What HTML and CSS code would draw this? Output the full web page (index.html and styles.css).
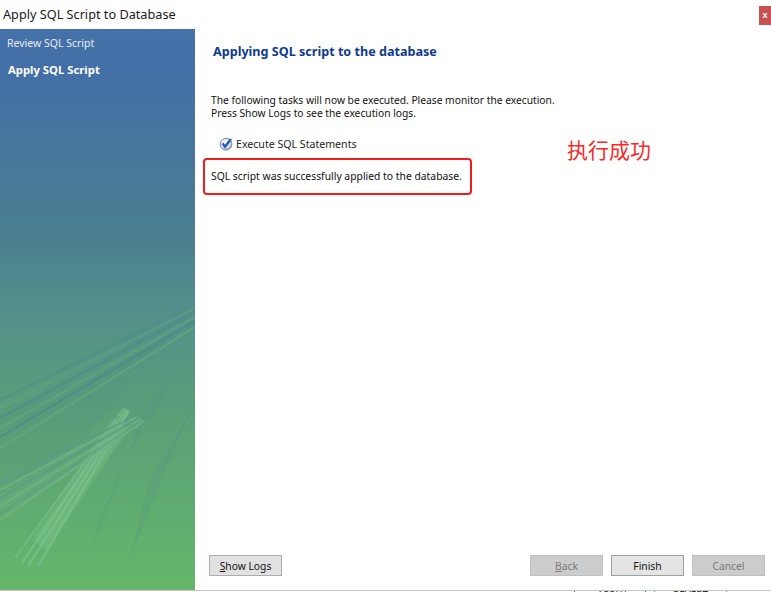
FILE: index.html
```html
<!DOCTYPE html>
<html lang="en">
<head>
<meta charset="utf-8">
<title>Apply SQL Script to Database</title>
<link rel="stylesheet" href="styles.css">
</head>
<body>
<div class="window">
  <header class="titlebar">
    <span class="title">Apply SQL Script to Database</span>
    <span class="close">x</span>
  </header>
  <div class="main">
    <aside class="sidebar">
      <svg class="art" viewBox="0 0 195 300" aria-hidden="true">
        <defs>
          <filter id="soft" x="-20%" y="-20%" width="140%" height="140%"><feGaussianBlur stdDeviation="1.6"/></filter>
          <filter id="tiny" x="-20%" y="-20%" width="140%" height="140%"><feGaussianBlur stdDeviation=".45"/></filter>
        </defs>
        <polygon points="195,40 157,63 83,150 55,175 0,205 0,120" fill="#4e8c83" opacity=".16"/>
        <polygon points="187,67 143,123 100,240 85,270 120,180" fill="#4e8c83" opacity=".13"/>
        <polygon points="195,113 165,180 127,277 150,190" fill="#4e8c83" opacity=".18"/>
        <g fill="none" stroke-width="2.6" filter="url(#tiny)">
          <path d="M195 15 L0 110" stroke="#4b8a8c" opacity=".4"/>
          <path d="M195 18 L0 118" stroke="#5ea57f" opacity=".4"/>
          <path d="M195 22 L0 128" stroke="#4a8a8c" opacity=".55"/>
          <path d="M195 27 L0 138" stroke="#62a87c" opacity=".5"/>
          <path d="M195 31 L0 147" stroke="#4a8a8c" opacity=".65"/>
          <path d="M195 37 L0 158" stroke="#62a87c" opacity=".65"/>
        </g>
        <path d="M120 134 L40 255" stroke="#7fc78e" stroke-width="18" opacity=".4" fill="none" filter="url(#soft)"/>
        <g fill="none" stroke-width="2" filter="url(#tiny)">
          <path d="M124 118 L15 268" stroke="#78bf8b" opacity=".65"/>
          <path d="M126 119 L22 273" stroke="#7cc48e" opacity=".7"/>
          <path d="M128 120 L28 276" stroke="#7cc48e" opacity=".7"/>
          <path d="M129 121 L38 276" stroke="#7cc48e" opacity=".7"/>
        </g>
        <path d="M118 142 L0 215" stroke="#6bb083" stroke-width="22" opacity=".28" fill="none" filter="url(#soft)"/>
        <g fill="none" stroke-width="2.2" filter="url(#tiny)">
          <path d="M135 126 L0 193" stroke="#5a9c86" opacity=".75"/>
          <path d="M137 127 L0 200" stroke="#6fb485" opacity=".7"/>
          <path d="M139 128 L0 208" stroke="#5a9c86" opacity=".75"/>
          <path d="M141 129 L0 216" stroke="#6fb485" opacity=".7"/>
          <path d="M143 130 L0 224" stroke="#5f9f84" opacity=".6"/>
          <path d="M144 131 L0 230" stroke="#6fb485" opacity=".7"/>
        </g>
      </svg>
      <nav class="steps">
        <div class="step">Review SQL Script</div>
        <div class="step current">Apply SQL Script</div>
      </nav>
    </aside>
    <section class="content">
      <h1 class="heading">Applying SQL script to the database</h1>
      <p class="intro">The following tasks will now be executed. Please monitor the execution.<br>Press Show Logs to see the execution logs.</p>
      <div class="task">
        <svg class="check" viewBox="0 0 14 14" aria-hidden="true">
          <defs>
            <radialGradient id="ball" cx=".4" cy=".35" r=".7">
              <stop offset="0" stop-color="#ffffff"/>
              <stop offset=".7" stop-color="#d4dbe6"/>
              <stop offset="1" stop-color="#7d8590"/>
            </radialGradient>
          </defs>
          <circle cx="7" cy="7.2" r="5.9" fill="url(#ball)" stroke="#7f868f" stroke-width="1"/>
          <path d="M3.6 6.4 L6 9.8 L12 2" fill="none" stroke="#1f5cc0" stroke-width="2.4"/>
        </svg>
        <span>Execute SQL Statements</span>
      </div>
      <div class="result-row">
        <p class="result">SQL script was successfully applied to the database.</p>
        <span class="note">执行成功</span>
      </div>
      <div class="spacer"></div>
      <footer class="actions">
        <button class="btn"><u>S</u>how Logs</button>
        <div class="nav-buttons">
          <button class="btn disabled"><u>B</u>ack</button>
          <button class="btn finish">Finish</button>
          <button class="btn disabled">Cancel</button>
        </div>
      </footer>
    </section>
  </div>
  <div class="under">
    <i class="tick blue t1"></i>
    <span class="under-a">APPLY</span>
    <i class="tick blue t2"></i>
    <i class="tick t3"></i>
    <span class="under-b">REVERT</span>
    <i class="tick t4"></i>
  </div>
</div>
</body>
</html>
```
FILE: styles.css
```css
* { box-sizing: border-box; }
html, body { margin: 0; height: 100%; overflow: hidden; background: #fff; }
body { font-family: "Noto Sans", "Open Sans", "Liberation Sans", sans-serif; color: #111; }
.window { width: 771px; height: 592px; display: flex; flex-direction: column; }

.titlebar { height: 29px; flex: none; display: flex; justify-content: space-between; padding: 6px 0 0 3px; }
.title { font-size: 12.7px; line-height: 16px; color: #1a1a1a; }
.close { width: 12px; height: 19px; background: #c75050; color: #fff; font: bold 9px/19px "Liberation Sans", sans-serif; text-align: center; }

.main { height: 561px; flex: none; display: flex; }
.sidebar {
  width: 195px; flex: none; position: relative;
  background: linear-gradient(180deg, #4471a8 0%, #436fa6 8%, #4b8090 38%, #53908a 50%, #5aa078 70%, #66b66a 100%);
}
.art { position: absolute; left: 0; top: 261px; width: 195px; height: 300px; }
.steps { position: relative; padding: 6px 0 0 7px; display: flex; flex-direction: column; gap: 9px; }
.step { font-size: 10.5px; line-height: 17px; color: #e6edf5; }
.step.current { font-size: 11.3px; font-weight: 700; color: #fff; margin-left: 1px; }

.content { flex: 1; display: flex; flex-direction: column; padding: 14px 6px 14px 16px; min-width: 0; }
.heading { margin: 0 0 0 2px; font-size: 12.6px; line-height: 18px; font-weight: 700; color: #0f3a8f; }
.intro { margin: 33px 0 0; font-size: 10.25px; line-height: 13px; color: #111; }
.task { margin: 16px 0 0 8px; display: flex; align-items: center; gap: 3px; font-size: 10.6px; line-height: 16px; color: #222; }
.check { width: 14px; height: 14px; flex: none; }
.result-row { margin-top: 6px; margin-left: -8px; display: flex; align-items: flex-start; position: relative; }
.result { margin: 0; width: 269px; height: 37px; padding: 0 0 2px 6px; border: 2px solid #f01c1c; border-radius: 4px; display: flex; align-items: center; font-size: 10.35px; color: #111; white-space: nowrap; }
.note { position: absolute; left: 364px; top: -23px; font-family: "Noto Sans CJK SC", sans-serif; font-size: 21px; line-height: 28px; color: #f52a2a; }
.spacer { flex: 1; }

.actions { display: flex; justify-content: space-between; margin-left: -2px; }
.nav-buttons { display: flex; gap: 8px; }
.btn { width: 73px; height: 21px; padding: 1px 0 0; background: #e1e1e1; border: 1px solid #adadad; font: 10.3px/18px "Noto Sans", sans-serif; color: #111; }
.btn.finish { border-color: #a0a0a0; background: #e4e4e4; }
.btn.disabled { background: #cccccc; border-color: #bfbfbf; color: #7a7a7a; }

.under { height: 2px; flex: none; border-top: 1px solid #c6c6c6; position: relative; }
.under-a, .under-b { position: absolute; top: 0; font-size: 10px; line-height: 8px; color: #333; height: 1px; overflow: hidden; }
.under-a { left: 597px; }
.under-b { left: 673px; }
.tick { position: absolute; top: 0; width: 1px; height: 1px; background: #9a9a9a; }
.tick.blue { background: #1f6fc0; }
.t1 { left: 574px; }
.t2 { left: 645px; }
.t3 { left: 654px; }
.t4 { left: 726px; }
```
